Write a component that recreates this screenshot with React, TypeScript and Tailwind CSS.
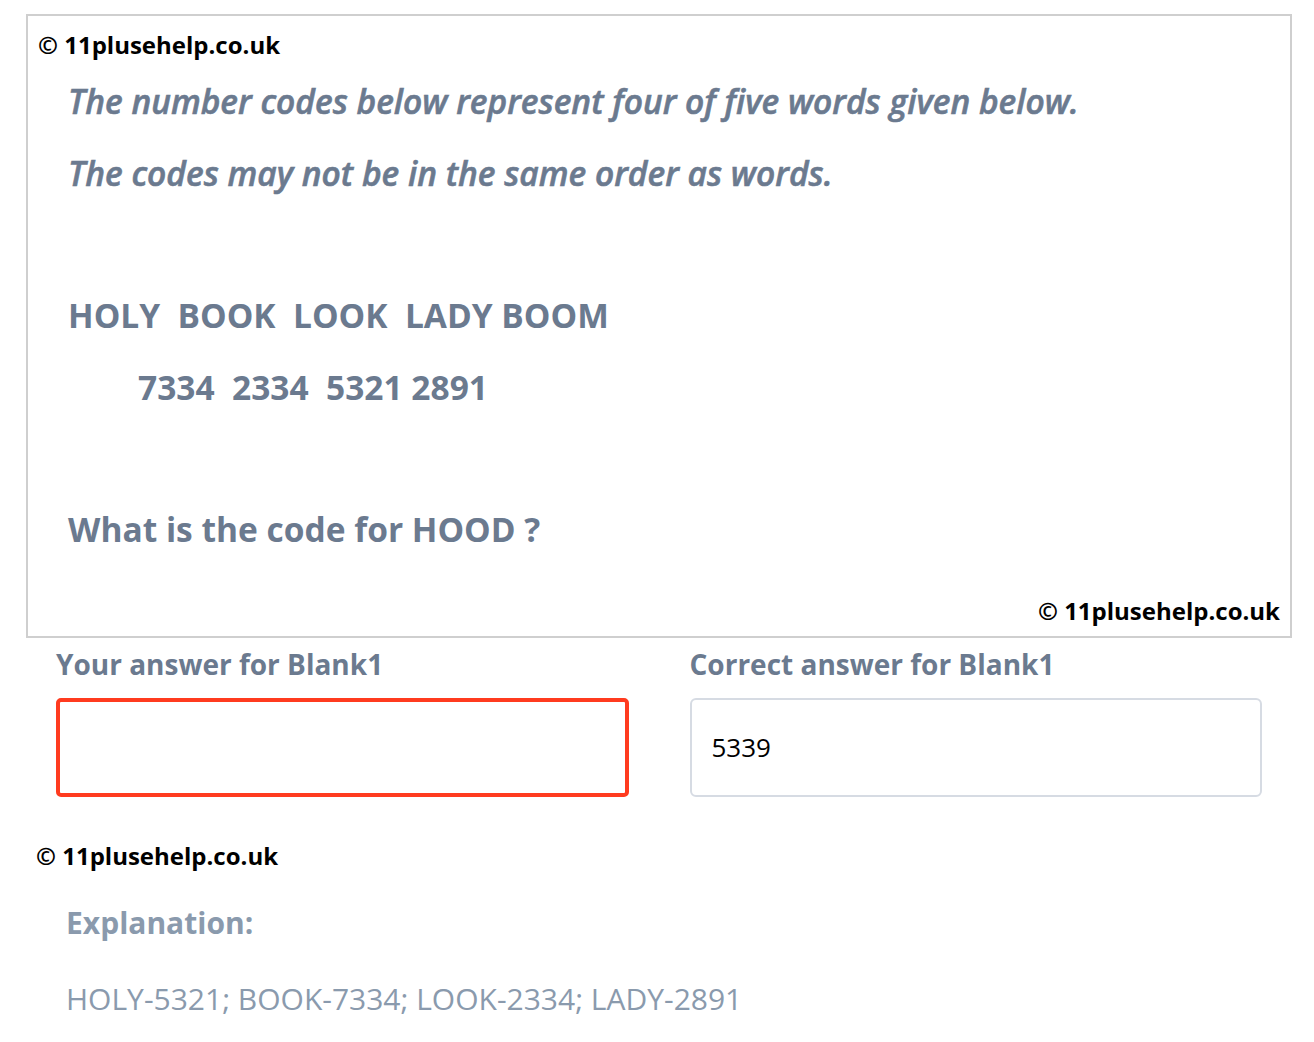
const font = { fontFamily: "'Open Sans', sans-serif" };

function Mark() {
  return <div className="text-[24px] font-bold text-black leading-none">© 11plusehelp.co.uk</div>;
}

export default function App() {
  return (
    <div className="w-[1314px] h-[1042px] bg-white pt-[14px]" style={font}>
      <div className="ml-[26px] w-[1266px] h-[624px] border-2 border-[#cfcfcf] pl-[10px] pr-[10px] pt-[17px] flex flex-col">
        <Mark />
        <div className="pl-[30px] text-[#6b7a8f]">
          <p className="mt-[28px] text-[33.5px] italic font-semibold leading-none [-webkit-text-stroke:0.6px_#6b7a8f]">
            The number codes below represent four of five words given below.
          </p>
          <p className="mt-[38px] text-[33.5px] italic font-semibold leading-none [-webkit-text-stroke:0.6px_#6b7a8f]">
            The codes may not be in the same order as words.
          </p>
          <p className="mt-[109px] text-[33.5px] font-bold leading-none whitespace-pre">HOLY  BOOK  LOOK  LADY BOOM</p>
          <p className="mt-[38px] pl-[70px] text-[33.5px] font-bold leading-none whitespace-pre">7334  2334  5321 2891</p>
          <p className="mt-[109px] text-[33.5px] font-bold leading-none">What is the code for HOOD ?</p>
        </div>
        <div className="mt-auto mb-[13px] flex justify-end">
          <Mark />
        </div>
      </div>
      <div className="mt-[12px] pl-[56px] pr-[52px] grid grid-cols-2 gap-[61px]">
        <div className="flex flex-col">
          <div className="text-[28px] font-bold text-[#6b7a8f] leading-none">Your answer for Blank1</div>
          <div className="mt-[20px] h-[99px] border-4 border-[#ff3b1f] rounded-[5px]"></div>
        </div>
        <div className="flex flex-col">
          <div className="text-[28px] font-bold text-[#6b7a8f] leading-none">Correct answer for Blank1</div>
          <div className="mt-[20px] h-[99px] border-2 border-[#d6dbe3] rounded-[6px] flex items-center px-[20px] text-[26px] text-black">
            5339
          </div>
        </div>
      </div>
      <div className="mt-[47px] pl-[36px]">
        <Mark />
      </div>
      <div className="pl-[66px] text-[#8a9aad]">
        <p className="mt-[40px] text-[30px] font-bold leading-none">Explanation:</p>
        <p className="mt-[46px] text-[30px] leading-none">HOLY-5321; BOOK-7334; LOOK-2334; LADY-2891</p>
      </div>
    </div>
  );
}
